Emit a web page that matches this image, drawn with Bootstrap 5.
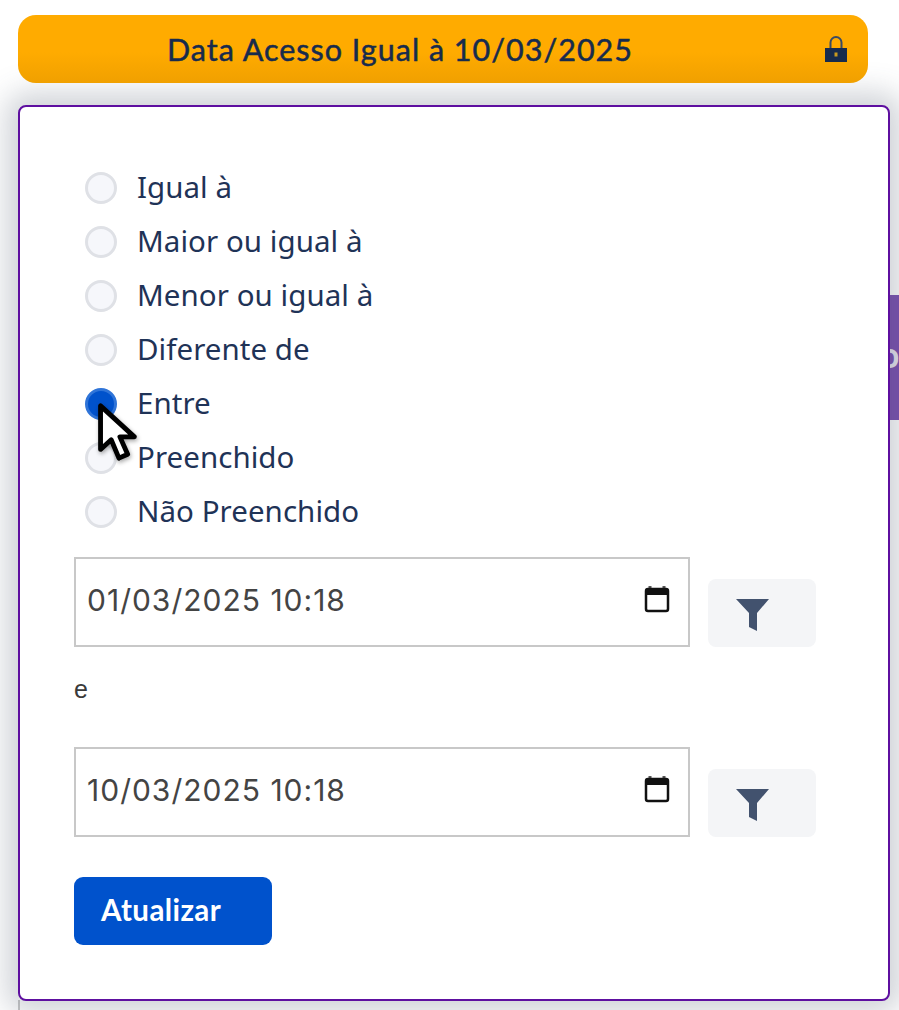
<!DOCTYPE html>
<html lang="pt">
<head>
<meta charset="utf-8">
<title>Filtro</title>
<link href="https://cdn.jsdelivr.net/npm/bootstrap@5.3.0/dist/css/bootstrap.min.css" rel="stylesheet">
<style>
html,body{height:100%;}
body{width:899px;height:1010px;overflow:hidden;background:#fff;position:relative;font-family:"Noto Sans",sans-serif;color:#172b4d;}
.stage{padding:15px 9px 0 18px;height:1010px;position:relative;}
.side-strip{position:absolute;left:889px;top:295px;width:10px;height:125px;background:#7a4fb0;}
.side-strip-letter{position:absolute;left:-10px;top:45px;font:700 26px "Noto Sans",sans-serif;color:#e8e6ef;}
.under-line{position:absolute;left:18px;top:1000px;width:2px;height:10px;background:#c8c8c8;}
.lock-bar{width:850px;height:68px;border-radius:18px;background:linear-gradient(#ffab00 0%,#ffab00 55%,#f0a000 100%);padding:0 20px 0 0;position:relative;z-index:1;}
.lock-title{font:400 30.5px/64px Lato,sans-serif;letter-spacing:1px;-webkit-text-stroke:.5px #172b4d;color:#172b4d;flex:1;text-align:center;padding-right:42px;}
.filter-panel{width:872px;height:896px;margin-top:22px;background:#fff;border:2px solid #5e0fa0;border-radius:8px;padding:54px 0 0 54px;position:relative;box-shadow:0 0 30px 12px rgba(70,80,100,.26);}
.choice{height:54px;display:flex;align-items:center;margin:0;padding:0 0 0 11px;}
.choice .form-check-input{width:32px;height:32px;margin:0 21px 0 0;float:none;background-color:#f6f7fb;border:3px solid #dfe1e6;flex:none;}
.choice .form-check-input:checked{background-color:#0052cc;border-color:#2f74d8;background-image:none;box-shadow:inset 0 0 0 9px #0052cc;}
.choice-label{font-size:29.5px;letter-spacing:.05px;line-height:54px;color:#1f3357;margin-top:-2px;margin-left:-1px;}
.date-row{display:flex;align-items:flex-start;gap:18px;}
.first-date{margin-top:18px;}
.date-box{width:616px;height:90px;border:2px solid #c8c8c8;display:flex;align-items:center;justify-content:space-between;padding:0 18px 0 11px;font:30px Inter,sans-serif;letter-spacing:1px;color:#444;}
.date-box-value{margin-top:-4px;}
.date-box svg{margin-top:-6px;}
.funnel-btn{width:108px;height:68px;margin-top:22px;background:#f4f5f7;border:0;border-radius:8px;padding:4px 44px 0 26px;line-height:0;}
.and-word{font:25px/1 "Liberation Sans",sans-serif;color:#3a3a3a;margin:0;height:100px;padding-top:30px;}
.apply-btn{width:198px;height:68px;margin-top:40px;background:#0052cc;border:0;border-radius:9px;color:#fff;font:700 29.5px Lato,sans-serif;letter-spacing:.4px;text-align:left;padding:0 0 4px 27px;}
.pointer{position:absolute;left:75px;top:296px;width:44px;height:60px;pointer-events:none;filter:drop-shadow(1px 2px 2px rgba(0,0,0,.35));}
</style>
</head>
<body>
<div class="stage">
  <div class="side-strip"><span class="side-strip-letter">O</span></div>
  <div class="under-line"></div>
  <div class="lock-bar d-flex align-items-center">
    <div class="lock-title">Data Acesso Igual à 10/03/2025</div>
    <svg width="24" height="28" viewBox="0 0 24 28" aria-hidden="true"><path d="M6.5 14V7.5a5.5 5.5 0 0 1 11 0V14" fill="none" stroke="#3b4a63" stroke-width="2"/><rect x="1" y="13" width="22" height="14" fill="#172b4d"/><rect x="10.5" y="17.5" width="3" height="4" fill="#c89a20"/></svg>
  </div>
  <div class="filter-panel">
    <div class="form-check choice"><input class="form-check-input" type="radio" name="op" id="o1"><label class="choice-label" for="o1">Igual à</label></div>
    <div class="form-check choice"><input class="form-check-input" type="radio" name="op" id="o2"><label class="choice-label" for="o2">Maior ou igual à</label></div>
    <div class="form-check choice"><input class="form-check-input" type="radio" name="op" id="o3"><label class="choice-label" for="o3">Menor ou igual à</label></div>
    <div class="form-check choice"><input class="form-check-input" type="radio" name="op" id="o4"><label class="choice-label" for="o4">Diferente de</label></div>
    <div class="form-check choice"><input class="form-check-input" type="radio" name="op" id="o5" checked><label class="choice-label" for="o5">Entre</label></div>
    <div class="form-check choice"><input class="form-check-input" type="radio" name="op" id="o6"><label class="choice-label" for="o6">Preenchido</label></div>
    <div class="form-check choice"><input class="form-check-input" type="radio" name="op" id="o7"><label class="choice-label" for="o7">Não Preenchido</label></div>
    <div class="date-row first-date">
      <div class="date-box"><span class="date-box-value">01/03/2025 10:18</span>
        <svg width="26" height="28" viewBox="0 0 26 28" aria-hidden="true"><path d="M6 1v5M20 1v5" stroke="#555" stroke-width="3"/><rect x="2" y="4" width="22" height="22" rx="2" fill="none" stroke="#111" stroke-width="2.5"/><rect x="2" y="4" width="22" height="6" fill="#111"/></svg></div>
      <button class="funnel-btn" type="button" aria-label="Filtrar"><svg width="36" height="34" viewBox="0 0 36 34"><path d="M1 1h33L22 15v18l-8-4V15z" fill="#42526e"/></svg></button>
    </div>
    <p class="and-word">e</p>
    <div class="date-row">
      <div class="date-box"><span class="date-box-value">10/03/2025 10:18</span>
        <svg width="26" height="28" viewBox="0 0 26 28" aria-hidden="true"><path d="M6 1v5M20 1v5" stroke="#555" stroke-width="3"/><rect x="2" y="4" width="22" height="22" rx="2" fill="none" stroke="#111" stroke-width="2.5"/><rect x="2" y="4" width="22" height="6" fill="#111"/></svg></div>
      <button class="funnel-btn" type="button" aria-label="Filtrar"><svg width="36" height="34" viewBox="0 0 36 34"><path d="M1 1h33L22 15v18l-8-4V15z" fill="#42526e"/></svg></button>
    </div>
    <button class="apply-btn d-block" type="button">Atualizar</button>
    <svg class="pointer" viewBox="0 0 44 62" aria-hidden="true"><path d="M5 3v45l11-10 8 19 9-4-8-18h15z" fill="#fff" stroke="#000" stroke-width="5" stroke-linejoin="round"/></svg>
  </div>
</div>
<script src="https://cdn.jsdelivr.net/npm/bootstrap@5.3.0/dist/js/bootstrap.bundle.min.js"></script>
</body>
</html>
